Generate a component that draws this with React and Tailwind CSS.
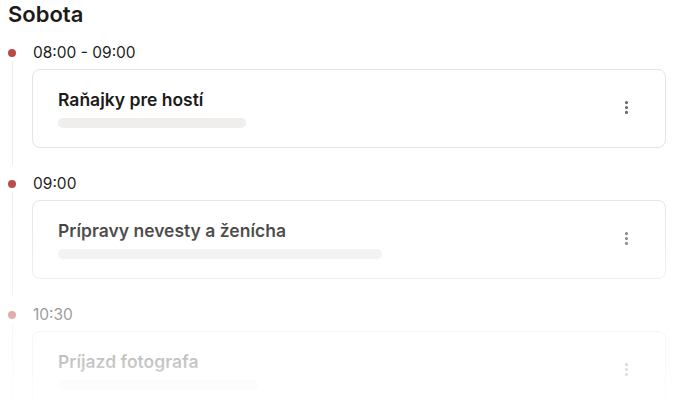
import React from 'react';
import { EllipsisVertical } from 'lucide-react';

const items = [
    { time: '08:00 - 09:00', title: 'Raňajky pre hostí', bar: 'w-[188px]' },
    { time: '09:00', title: 'Prípravy nevesty a ženícha', bar: 'w-[324px]' },
    { time: '10:30', title: 'Príjazd fotografa', bar: 'w-[200px]' },
];

// One row of the agenda: dot + line on the left, time and card on the right
function AgendaItem({ time, title, bar }) {
    return (
        <div className="flex gap-[16px]">
            <div className="flex w-[8px] flex-col items-center">
                <span className="mt-[7px] h-[8px] w-[8px] shrink-0 rounded-full bg-[#b94a48]" />
                <span className="mt-[4px] mb-[8px] w-px flex-1 bg-[#ebebeb]" />
            </div>
            <div className="flex-1 pb-[25px]">
                <div className="h-[22px] pl-px text-[15.5px] leading-[22px] text-[#1c1b1a]">{time}</div>
                <div className="mt-[5px] flex items-center justify-between rounded-lg border border-[#e4e4e4] bg-white pt-[16px] pb-[19px] pl-[25px] pr-[30px]">
                    <div>
                        <h4 className="text-[17.5px] font-semibold leading-7 text-[#1c1b1a]">{title}</h4>
                        <div className={`mt-[4px] h-[10px] rounded-full bg-[#efeeed] ${bar}`} />
                    </div>
                    <EllipsisVertical className="h-[17px] w-[17px] text-[#666]" strokeWidth={2.5} />
                </div>
            </div>
        </div>
    );
}

export default function App() {
    return (
        <div className="relative h-[400px] overflow-hidden bg-white px-2 font-['Inter',sans-serif]">
            <h2 className="text-[22px] font-semibold leading-7 text-[#1c1b1a]">Sobota</h2>
            <div className="mt-[14px]">
                {items.map((it) => (
                    <AgendaItem key={it.time} {...it} />
                ))}
            </div>
            {/* fade-out towards the bottom */}
            <div className="pointer-events-none absolute inset-x-0 top-[180px] h-[220px] bg-linear-to-b from-white/0 to-white/90" />
        </div>
    );
}
